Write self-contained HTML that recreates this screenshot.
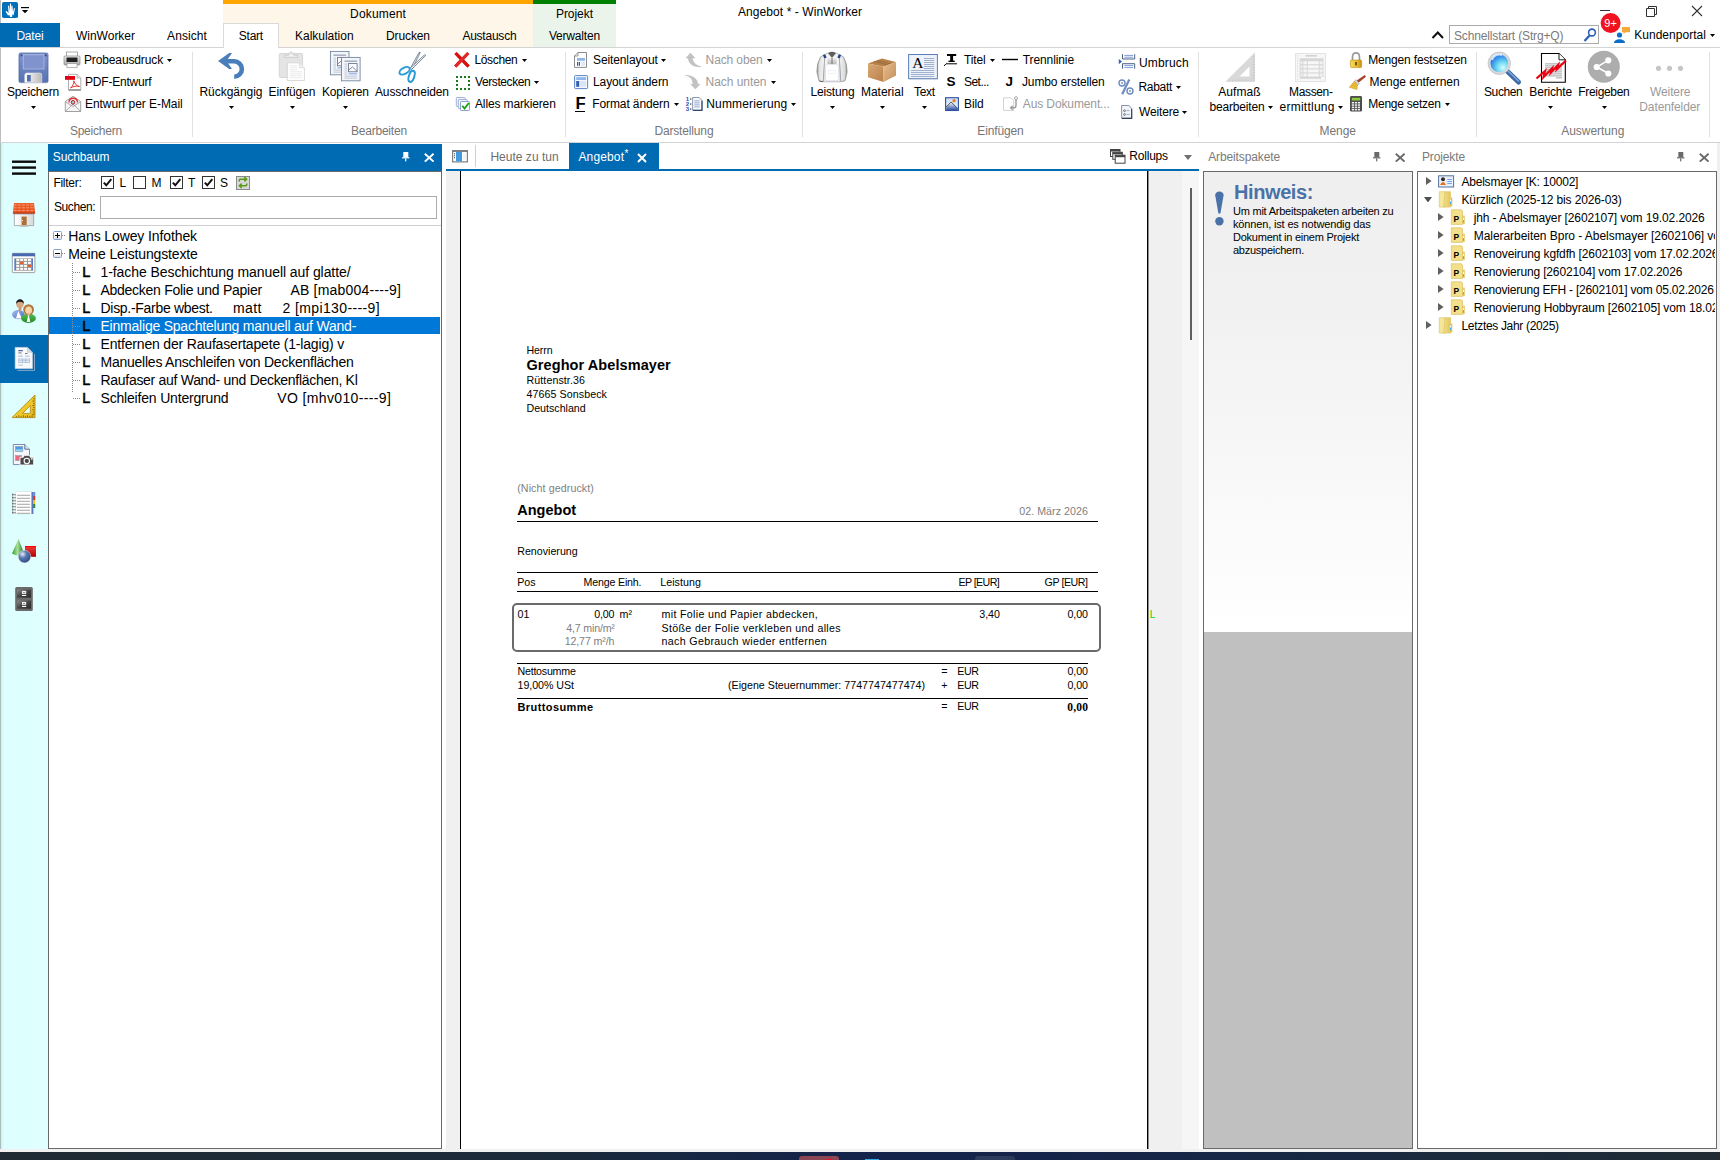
<!DOCTYPE html>
<html><head><meta charset="utf-8"><title>Angebot * - WinWorker</title>
<style>
html,body{margin:0;padding:0}
body{width:1720px;height:1160px;position:relative;overflow:hidden;background:#fff;font-family:"Liberation Sans",sans-serif;font-size:12px;color:#000}
div,span,svg{position:absolute}
span{white-space:pre}
</style></head><body>
<div style="left:0px;top:0px;width:1px;height:143px;background:#bdbdbd"></div>
<div style="left:223px;top:0px;width:310px;height:47px;background:#fef6e9"></div>
<div style="left:223px;top:0px;width:310px;height:4px;background:#ffa500"></div>
<div style="left:533px;top:0px;width:83px;height:47px;background:#ebf4eb"></div>
<div style="left:533px;top:0px;width:83px;height:4px;background:#008000"></div>
<span style="top:6.84px;letter-spacing:0.162px;left:228.08px;width:300px;text-align:center;line-height:15px;">Dokument</span>
<span style="top:6.84px;letter-spacing:-0.051px;left:424.47px;width:300px;text-align:center;line-height:15px;">Projekt</span>
<span style="top:4.84px;letter-spacing:0.071px;left:650.04px;width:300px;text-align:center;line-height:15px;">Angebot * - WinWorker</span>
<div style="left:0px;top:23px;width:60px;height:24px;background:#006ab3"></div>
<span style="top:28.64px;letter-spacing:-0.203px;left:-120.10px;width:300px;text-align:center;line-height:15px;color:#fff;">Datei</span>
<span style="top:29.14px;letter-spacing:-0.014px;left:-44.51px;width:300px;text-align:center;line-height:15px;">WinWorker</span>
<span style="top:29.14px;letter-spacing:0.092px;left:37.05px;width:300px;text-align:center;line-height:15px;">Ansicht</span>
<div style="left:0px;top:47px;width:1720px;height:1px;background:#d4d4d4"></div>
<div style="left:223px;top:23px;width:56px;height:25px;background:#fff;border:1px solid #dadada;border-bottom:none;box-sizing:border-box"></div>
<span style="top:29.14px;letter-spacing:-0.269px;left:100.87px;width:300px;text-align:center;line-height:15px;">Start</span>
<span style="top:29.14px;letter-spacing:-0.011px;left:174.29px;width:300px;text-align:center;line-height:15px;">Kalkulation</span>
<span style="top:29.14px;letter-spacing:-0.098px;left:257.95px;width:300px;text-align:center;line-height:15px;">Drucken</span>
<span style="top:29.14px;letter-spacing:-0.227px;left:339.39px;width:300px;text-align:center;line-height:15px;">Austausch</span>
<span style="top:29.14px;letter-spacing:-0.189px;left:424.41px;width:300px;text-align:center;line-height:15px;">Verwalten</span>
<div style="left:0px;top:142px;width:1720px;height:1px;background:#d4d4d4"></div>
<div style="left:192px;top:52px;width:1px;height:85px;background:#e1e1e1"></div>
<div style="left:565px;top:52px;width:1px;height:85px;background:#e1e1e1"></div>
<div style="left:802px;top:52px;width:1px;height:85px;background:#e1e1e1"></div>
<div style="left:1198px;top:52px;width:1px;height:85px;background:#e1e1e1"></div>
<div style="left:1476px;top:52px;width:1px;height:85px;background:#e1e1e1"></div>
<div style="left:1709px;top:52px;width:1px;height:85px;background:#e1e1e1"></div>
<span style="top:124.34px;letter-spacing:-0.227px;left:-54.11px;width:300px;text-align:center;line-height:15px;color:#767676;">Speichern</span>
<span style="top:124.34px;letter-spacing:-0.205px;left:228.90px;width:300px;text-align:center;line-height:15px;color:#767676;">Bearbeiten</span>
<span style="top:124.34px;letter-spacing:-0.155px;left:533.92px;width:300px;text-align:center;line-height:15px;color:#767676;">Darstellung</span>
<span style="top:124.34px;letter-spacing:-0.134px;left:850.43px;width:300px;text-align:center;line-height:15px;color:#767676;">Einfügen</span>
<span style="top:124.34px;letter-spacing:-0.061px;left:1187.77px;width:300px;text-align:center;line-height:15px;color:#767676;">Menge</span>
<span style="top:124.34px;letter-spacing:-0.037px;left:1442.78px;width:300px;text-align:center;line-height:15px;color:#767676;">Auswertung</span>
<span style="top:85.34px;letter-spacing:-0.227px;left:-117.11px;width:300px;text-align:center;line-height:15px;">Speichern</span>
<svg style="left:30.5px;top:106.0px;" width="5" height="3" viewBox="0 0 5 3"><path d="M0 0H5L2.5 3Z" fill="#000"/></svg>
<span style="top:85.34px;letter-spacing:-0.037px;left:80.98px;width:300px;text-align:center;line-height:15px;">Rückgängig</span>
<svg style="left:228.5px;top:106.0px;" width="5" height="3" viewBox="0 0 5 3"><path d="M0 0H5L2.5 3Z" fill="#000"/></svg>
<span style="top:85.34px;letter-spacing:-0.047px;left:141.98px;width:300px;text-align:center;line-height:15px;">Einfügen</span>
<svg style="left:289.5px;top:106.0px;" width="5" height="3" viewBox="0 0 5 3"><path d="M0 0H5L2.5 3Z" fill="#000"/></svg>
<span style="top:85.34px;letter-spacing:-0.131px;left:195.43px;width:300px;text-align:center;line-height:15px;">Kopieren</span>
<svg style="left:343.0px;top:106.0px;" width="5" height="3" viewBox="0 0 5 3"><path d="M0 0H5L2.5 3Z" fill="#000"/></svg>
<span style="top:85.34px;letter-spacing:-0.116px;left:261.94px;width:300px;text-align:center;line-height:15px;">Ausschneiden</span>
<span style="top:85.34px;letter-spacing:-0.172px;left:682.41px;width:300px;text-align:center;line-height:15px;">Leistung</span>
<svg style="left:830.0px;top:106.0px;" width="5" height="3" viewBox="0 0 5 3"><path d="M0 0H5L2.5 3Z" fill="#000"/></svg>
<span style="top:85.34px;letter-spacing:0.002px;left:732.30px;width:300px;text-align:center;line-height:15px;">Material</span>
<svg style="left:879.8px;top:106.0px;" width="5" height="3" viewBox="0 0 5 3"><path d="M0 0H5L2.5 3Z" fill="#000"/></svg>
<span style="top:85.34px;letter-spacing:-0.354px;left:774.42px;width:300px;text-align:center;line-height:15px;">Text</span>
<svg style="left:922.1px;top:106.0px;" width="5" height="3" viewBox="0 0 5 3"><path d="M0 0H5L2.5 3Z" fill="#000"/></svg>
<span style="top:85.34px;letter-spacing:0.064px;left:1089.43px;width:300px;text-align:center;line-height:15px;">Aufmaß</span>
<span style="top:100.34px;letter-spacing:-0.172px;left:1086.91px;width:300px;text-align:center;line-height:15px;">bearbeiten</span>
<svg style="left:1268.0px;top:106.0px;" width="5" height="3" viewBox="0 0 5 3"><path d="M0 0H5L2.5 3Z" fill="#000"/></svg>
<span style="top:85.34px;letter-spacing:-0.359px;left:1160.82px;width:300px;text-align:center;line-height:15px;">Massen-</span>
<span style="top:100.34px;letter-spacing:0.231px;left:1157.12px;width:300px;text-align:center;line-height:15px;">ermittlung</span>
<svg style="left:1338.0px;top:106.0px;" width="5" height="3" viewBox="0 0 5 3"><path d="M0 0H5L2.5 3Z" fill="#000"/></svg>
<span style="top:85.34px;letter-spacing:-0.384px;left:1353.21px;width:300px;text-align:center;line-height:15px;">Suchen</span>
<span style="top:85.34px;letter-spacing:-0.179px;left:1400.61px;width:300px;text-align:center;line-height:15px;">Berichte</span>
<svg style="left:1548.2px;top:106.0px;" width="5" height="3" viewBox="0 0 5 3"><path d="M0 0H5L2.5 3Z" fill="#000"/></svg>
<span style="top:85.34px;letter-spacing:-0.305px;left:1453.85px;width:300px;text-align:center;line-height:15px;">Freigeben</span>
<svg style="left:1601.5px;top:106.0px;" width="5" height="3" viewBox="0 0 5 3"><path d="M0 0H5L2.5 3Z" fill="#000"/></svg>
<span style="top:85.34px;letter-spacing:-0.134px;left:1520.23px;width:300px;text-align:center;line-height:15px;color:#9a9a9a;">Weitere</span>
<span style="top:100.34px;letter-spacing:-0.095px;left:1519.75px;width:300px;text-align:center;line-height:15px;color:#9a9a9a;">Datenfelder</span>
<span style="top:53.34px;letter-spacing:-0.132px;left:84.00px;line-height:15px;">Probeausdruck</span>
<svg style="left:167.0px;top:59.0px;" width="5" height="3" viewBox="0 0 5 3"><path d="M0 0H5L2.5 3Z" fill="#000"/></svg>
<span style="top:75.34px;letter-spacing:-0.199px;left:85.00px;line-height:15px;">PDF-Entwurf</span>
<span style="top:97.34px;letter-spacing:-0.056px;left:85.00px;line-height:15px;">Entwurf per E-Mail</span>
<span style="top:53.34px;letter-spacing:-0.339px;left:474.40px;line-height:15px;">Löschen</span>
<svg style="left:522.0px;top:59.0px;" width="5" height="3" viewBox="0 0 5 3"><path d="M0 0H5L2.5 3Z" fill="#000"/></svg>
<span style="top:75.34px;letter-spacing:-0.408px;left:475.00px;line-height:15px;">Verstecken</span>
<svg style="left:534.0px;top:81.0px;" width="5" height="3" viewBox="0 0 5 3"><path d="M0 0H5L2.5 3Z" fill="#000"/></svg>
<span style="top:97.34px;letter-spacing:-0.134px;left:475.00px;line-height:15px;">Alles markieren</span>
<span style="top:53.34px;letter-spacing:-0.112px;left:593.00px;line-height:15px;">Seitenlayout</span>
<svg style="left:661.0px;top:59.0px;" width="5" height="3" viewBox="0 0 5 3"><path d="M0 0H5L2.5 3Z" fill="#000"/></svg>
<span style="top:75.34px;letter-spacing:-0.103px;left:593.00px;line-height:15px;">Layout ändern</span>
<span style="top:97.34px;letter-spacing:-0.116px;left:592.30px;line-height:15px;">Format ändern</span>
<svg style="left:674.0px;top:103.0px;" width="5" height="3" viewBox="0 0 5 3"><path d="M0 0H5L2.5 3Z" fill="#000"/></svg>
<span style="top:53.34px;letter-spacing:-0.116px;left:705.60px;line-height:15px;color:#9a9a9a;">Nach oben</span>
<svg style="left:766.5px;top:59.0px;" width="5" height="3" viewBox="0 0 5 3"><path d="M0 0H5L2.5 3Z" fill="#000"/></svg>
<span style="top:75.34px;letter-spacing:-0.049px;left:705.60px;line-height:15px;color:#9a9a9a;">Nach unten</span>
<svg style="left:770.5px;top:81.0px;" width="5" height="3" viewBox="0 0 5 3"><path d="M0 0H5L2.5 3Z" fill="#000"/></svg>
<span style="top:97.34px;letter-spacing:0.145px;left:706.30px;line-height:15px;">Nummerierung</span>
<svg style="left:791.0px;top:103.0px;" width="5" height="3" viewBox="0 0 5 3"><path d="M0 0H5L2.5 3Z" fill="#000"/></svg>
<span style="top:53.34px;letter-spacing:-0.127px;left:964.00px;line-height:15px;">Titel</span>
<svg style="left:990.0px;top:59.0px;" width="5" height="3" viewBox="0 0 5 3"><path d="M0 0H5L2.5 3Z" fill="#000"/></svg>
<span style="top:75.34px;letter-spacing:-0.536px;left:964.00px;line-height:15px;">Set...</span>
<span style="top:97.34px;letter-spacing:-0.079px;left:964.00px;line-height:15px;">Bild</span>
<span style="top:53.34px;letter-spacing:-0.105px;left:1022.80px;line-height:15px;">Trennlinie</span>
<span style="top:75.34px;letter-spacing:-0.141px;left:1022.00px;line-height:15px;">Jumbo erstellen</span>
<span style="top:97.34px;letter-spacing:-0.115px;left:1022.80px;line-height:15px;color:#9a9a9a;">Aus Dokument...</span>
<span style="top:55.64px;letter-spacing:0.159px;left:1139.00px;line-height:15px;">Umbruch</span>
<span style="top:80.14px;letter-spacing:-0.293px;left:1138.40px;line-height:15px;">Rabatt</span>
<svg style="left:1175.5px;top:85.8px;" width="5" height="3" viewBox="0 0 5 3"><path d="M0 0H5L2.5 3Z" fill="#000"/></svg>
<span style="top:105.34px;letter-spacing:-0.163px;left:1139.00px;line-height:15px;">Weitere</span>
<svg style="left:1182.0px;top:111.0px;" width="5" height="3" viewBox="0 0 5 3"><path d="M0 0H5L2.5 3Z" fill="#000"/></svg>
<span style="top:53.34px;letter-spacing:-0.177px;left:1368.30px;line-height:15px;">Mengen festsetzen</span>
<span style="top:75.34px;letter-spacing:-0.042px;left:1369.50px;line-height:15px;">Menge entfernen</span>
<span style="top:97.34px;letter-spacing:-0.258px;left:1368.30px;line-height:15px;">Menge setzen</span>
<svg style="left:1445.0px;top:103.0px;" width="5" height="3" viewBox="0 0 5 3"><path d="M0 0H5L2.5 3Z" fill="#000"/></svg>
<div style="left:1449px;top:25px;width:150px;height:19px;border:1px solid #ababab;box-sizing:border-box;background:#fff"></div>
<span style="top:29.14px;letter-spacing:-0.142px;left:1454.00px;line-height:15px;color:#7a7a7a;">Schnellstart (Strg+Q)</span>
<span style="top:27.84px;letter-spacing:0.034px;left:1634.20px;line-height:15px;">Kundenportal</span>
<svg style="left:1709.5px;top:34.0px;" width="5" height="3" viewBox="0 0 5 3"><path d="M0 0H5L2.5 3Z" fill="#000"/></svg>
<div style="left:0px;top:143px;width:48px;height:1009px;background:linear-gradient(90deg,#a9bdbd 0,#a9bdbd 1px,#d3f0f0 1px,#deffff 4px,#e0ffff 100%)"></div>
<div style="left:0px;top:335px;width:48px;height:48px;background:#006ab3"></div>
<div style="left:48px;top:144px;width:394px;height:27px;background:#006ab3"></div>
<span style="top:149.64px;letter-spacing:-0.097px;left:52.80px;line-height:15px;color:#fff;">Suchbaum</span>
<div style="left:48px;top:171px;width:394px;height:978px;border:1px solid #696969;box-sizing:border-box;background:#fff"></div>
<span style="top:175.84px;letter-spacing:-0.257px;left:53.40px;line-height:15px;">Filter:</span>
<div style="left:101px;top:176px;width:13px;height:13px;border:1px solid #333;box-sizing:border-box;background:#fff"></div>
<svg style="left:101px;top:176px;" width="13" height="13" viewBox="0 0 13 13"><path d="M2.8 6.6L5.3 9.3L10.3 3.2" fill="none" stroke="#111" stroke-width="2"/></svg>
<span style="top:175.64px;left:119.60px;line-height:15px;">L</span>
<div style="left:133px;top:176px;width:13px;height:13px;border:1px solid #333;box-sizing:border-box;background:#fff"></div>
<span style="top:175.64px;left:151.50px;line-height:15px;">M</span>
<div style="left:170px;top:176px;width:13px;height:13px;border:1px solid #333;box-sizing:border-box;background:#fff"></div>
<svg style="left:170px;top:176px;" width="13" height="13" viewBox="0 0 13 13"><path d="M2.8 6.6L5.3 9.3L10.3 3.2" fill="none" stroke="#111" stroke-width="2"/></svg>
<span style="top:175.64px;left:188.10px;line-height:15px;">T</span>
<div style="left:202px;top:176px;width:13px;height:13px;border:1px solid #333;box-sizing:border-box;background:#fff"></div>
<svg style="left:202px;top:176px;" width="13" height="13" viewBox="0 0 13 13"><path d="M2.8 6.6L5.3 9.3L10.3 3.2" fill="none" stroke="#111" stroke-width="2"/></svg>
<span style="top:175.64px;left:220.10px;line-height:15px;">S</span>
<div style="left:236px;top:175.5px;width:14px;height:14px;border:1px solid #8a8a8a;box-sizing:border-box;background:#d9d9d9"></div>
<span style="top:199.64px;letter-spacing:-0.407px;left:54.00px;line-height:15px;">Suchen:</span>
<div style="left:100px;top:196px;width:337px;height:23px;border:1px solid #ababab;box-sizing:border-box;background:#fff"></div>
<div style="left:49px;top:225px;width:392px;height:1px;background:#d0d0d0"></div>
<div style="left:49px;top:317px;width:391px;height:17px;background:#0078d7"></div>
<span style="top:227.05px;letter-spacing:-0.108px;left:68.30px;font-size:14px;line-height:18px;">Hans Lowey Infothek</span>
<span style="top:245.05px;letter-spacing:-0.146px;left:68.30px;font-size:14px;line-height:18px;">Meine Leistungstexte</span>
<span style="top:262.88px;left:82.30px;font-size:14.5px;line-height:18px;-webkit-text-stroke:0.55px #000;">L</span>
<span style="top:263.05px;letter-spacing:-0.073px;left:100.50px;font-size:14px;line-height:18px;">1-fache Beschichtung manuell auf glatte/</span>
<div style="left:73px;top:271.9px;width:7px;height:1px;background:repeating-linear-gradient(90deg,#888 0 1px,transparent 1px 2px)"></div>
<span style="top:280.88px;left:82.30px;font-size:14.5px;line-height:18px;-webkit-text-stroke:0.55px #000;">L</span>
<span style="top:281.05px;letter-spacing:-0.272px;left:100.50px;font-size:14px;line-height:18px;">Abdecken Folie und Papier</span>
<span style="top:281.05px;letter-spacing:0.214px;left:290.40px;font-size:14px;line-height:18px;">AB [mab004----9]</span>
<div style="left:73px;top:289.9px;width:7px;height:1px;background:repeating-linear-gradient(90deg,#888 0 1px,transparent 1px 2px)"></div>
<span style="top:298.88px;left:82.30px;font-size:14.5px;line-height:18px;-webkit-text-stroke:0.55px #000;">L</span>
<span style="top:299.05px;letter-spacing:-0.294px;left:100.50px;font-size:14px;line-height:18px;">Disp.-Farbe wbest.</span>
<span style="top:299.05px;letter-spacing:0.316px;left:233.10px;font-size:14px;line-height:18px;">matt</span>
<span style="top:299.05px;letter-spacing:0.373px;left:282.60px;font-size:14px;line-height:18px;">2 [mpi130----9]</span>
<div style="left:73px;top:307.9px;width:7px;height:1px;background:repeating-linear-gradient(90deg,#888 0 1px,transparent 1px 2px)"></div>
<span style="top:316.88px;left:82.30px;font-size:14.5px;line-height:18px;-webkit-text-stroke:0.55px #000;">L</span>
<span style="top:317.05px;letter-spacing:-0.218px;left:100.50px;font-size:14px;line-height:18px;color:#fff;">Einmalige Spachtelung manuell auf Wand-</span>
<div style="left:73px;top:325.9px;width:7px;height:1px;background:repeating-linear-gradient(90deg,#888 0 1px,transparent 1px 2px)"></div>
<span style="top:334.88px;left:82.30px;font-size:14.5px;line-height:18px;-webkit-text-stroke:0.55px #000;">L</span>
<span style="top:335.05px;letter-spacing:-0.177px;left:100.50px;font-size:14px;line-height:18px;">Entfernen der Raufasertapete (1-lagig) v</span>
<div style="left:73px;top:343.9px;width:7px;height:1px;background:repeating-linear-gradient(90deg,#888 0 1px,transparent 1px 2px)"></div>
<span style="top:352.88px;left:82.30px;font-size:14.5px;line-height:18px;-webkit-text-stroke:0.55px #000;">L</span>
<span style="top:353.05px;letter-spacing:-0.238px;left:100.50px;font-size:14px;line-height:18px;">Manuelles Anschleifen von Deckenflächen</span>
<div style="left:73px;top:361.9px;width:7px;height:1px;background:repeating-linear-gradient(90deg,#888 0 1px,transparent 1px 2px)"></div>
<span style="top:370.88px;left:82.30px;font-size:14.5px;line-height:18px;-webkit-text-stroke:0.55px #000;">L</span>
<span style="top:371.05px;letter-spacing:-0.294px;left:100.50px;font-size:14px;line-height:18px;">Raufaser auf Wand- und Deckenflächen, Kl</span>
<div style="left:73px;top:379.9px;width:7px;height:1px;background:repeating-linear-gradient(90deg,#888 0 1px,transparent 1px 2px)"></div>
<span style="top:388.88px;left:82.30px;font-size:14.5px;line-height:18px;-webkit-text-stroke:0.55px #000;">L</span>
<span style="top:389.05px;letter-spacing:-0.182px;left:100.50px;font-size:14px;line-height:18px;">Schleifen Untergrund</span>
<span style="top:389.05px;letter-spacing:0.360px;left:277.30px;font-size:14px;line-height:18px;">VO [mhv010----9]</span>
<div style="left:73px;top:397.9px;width:7px;height:1px;background:repeating-linear-gradient(90deg,#888 0 1px,transparent 1px 2px)"></div>
<div style="left:72px;top:263px;width:1px;height:130px;background:repeating-linear-gradient(180deg,#888 0 1px,transparent 1px 2px)"></div>
<svg style="left:53px;top:231.2px;" width="9" height="9" viewBox="0 0 9 9"><defs><linearGradient id="gEx" x1="0" y1="0" x2="0" y2="1"><stop offset="0.4" stop-color="#fff"/><stop offset="1" stop-color="#d8d8d8"/></linearGradient></defs><rect x="0.5" y="0.5" width="8" height="8" rx="1" fill="url(#gEx)" stroke="#7f9fd4"/><path d="M2 4.5H7" stroke="#000"/><path d="M4.5 2V7" stroke="#000"/></svg>
<div style="left:62px;top:235.2px;width:3px;height:1px;background:repeating-linear-gradient(90deg,#888 0 1px,transparent 1px 2px)"></div>
<svg style="left:53px;top:249.2px;" width="9" height="9" viewBox="0 0 9 9"><defs><linearGradient id="gEx" x1="0" y1="0" x2="0" y2="1"><stop offset="0.4" stop-color="#fff"/><stop offset="1" stop-color="#d8d8d8"/></linearGradient></defs><rect x="0.5" y="0.5" width="8" height="8" rx="1" fill="url(#gEx)" stroke="#7f9fd4"/><path d="M2 4.5H7" stroke="#000"/></svg>
<div style="left:62px;top:253.2px;width:3px;height:1px;background:repeating-linear-gradient(90deg,#888 0 1px,transparent 1px 2px)"></div>
<div style="left:446px;top:169px;width:753px;height:2px;background:#006ab3"></div>
<div style="left:569px;top:143px;width:90px;height:26px;background:#006ab3"></div>
<div style="left:475px;top:145px;width:1px;height:22px;background:#d0d0d0"></div>
<span style="top:149.64px;letter-spacing:0.021px;left:490.40px;line-height:15px;color:#6d6d6d;">Heute zu tun</span>
<span style="top:149.64px;letter-spacing:0.154px;left:578.40px;line-height:15px;color:#fff;">Angebot</span>
<span style="top:148.03px;left:624.50px;font-size:10px;line-height:12px;color:#fff;">*</span>
<svg style="left:637px;top:153px;" width="10" height="10" viewBox="0 0 10 10"><path d="M1 1L9 9M9 1L1 9" stroke="#fff" stroke-width="2" fill="none"/></svg>
<span style="top:148.84px;letter-spacing:-0.204px;left:1129.30px;line-height:15px;">Rollups</span>
<svg style="left:1184px;top:155px;" width="8" height="5" viewBox="0 0 8 5"><path d="M0 0H8L4 5Z" fill="#707070"/></svg>
<div style="left:446px;top:171px;width:753px;height:978px;background:#f0f0f0"></div>
<div style="left:1182px;top:171px;width:17px;height:978px;background:#f6f6f6"></div>
<div style="left:1190px;top:188px;width:2px;height:152px;background:#606060"></div>
<div style="left:460px;top:171px;width:688px;height:978px;background:#fff;border-left:1px solid #000;border-right:1px solid #000;box-sizing:border-box"></div>
<div style="left:1148px;top:171px;width:1px;height:978px;background:#8c8c8c"></div>
<div style="left:446px;top:1149px;width:753px;height:1px;background:#f0f0f0"></div>
<span style="top:343.80px;letter-spacing:-0.131px;left:526.50px;font-size:10.67px;line-height:13px;">Herrn</span>
<span style="top:355.98px;letter-spacing:0.077px;left:526.50px;font-size:14.5px;line-height:18px;font-weight:700;">Greghor Abelsmayer</span>
<span style="top:373.80px;letter-spacing:0.086px;left:526.50px;font-size:10.67px;line-height:13px;">Rüttenstr.36</span>
<span style="top:387.80px;letter-spacing:0.078px;left:526.50px;font-size:10.67px;line-height:13px;">47665 Sonsbeck</span>
<span style="top:401.80px;letter-spacing:-0.005px;left:526.50px;font-size:10.67px;line-height:13px;">Deutschland</span>
<span style="top:481.80px;letter-spacing:0.099px;left:517.20px;font-size:10.67px;line-height:13px;color:#808080;">(Nicht gedruckt)</span>
<span style="top:500.98px;letter-spacing:0.029px;left:517.20px;font-size:14.5px;line-height:18px;font-weight:700;">Angebot</span>
<span style="top:504.80px;letter-spacing:0.060px;right:631.94px;font-size:10.67px;line-height:13px;color:#808080;">02. März 2026</span>
<div style="left:517px;top:521px;width:581px;height:1px;background:#000"></div>
<span style="top:544.80px;letter-spacing:0.006px;left:517.20px;font-size:10.67px;line-height:13px;">Renovierung</span>
<div style="left:517px;top:572px;width:581px;height:1px;background:#000"></div>
<span style="top:575.60px;left:517.20px;font-size:10.67px;line-height:13px;">Pos</span>
<span style="top:575.60px;letter-spacing:-0.177px;left:583.50px;font-size:10.67px;line-height:13px;">Menge Einh.</span>
<span style="top:575.60px;letter-spacing:0.050px;left:660.20px;font-size:10.67px;line-height:13px;">Leistung</span>
<span style="top:575.60px;letter-spacing:-0.576px;right:720.78px;font-size:10.67px;line-height:13px;">EP [EUR]</span>
<span style="top:575.60px;letter-spacing:-0.449px;right:632.45px;font-size:10.67px;line-height:13px;">GP [EUR]</span>
<div style="left:517px;top:591px;width:581px;height:1px;background:#000"></div>
<div style="left:512px;top:603px;width:589px;height:49px;border:2px solid #6a6a6a;border-radius:5px;box-sizing:border-box"></div>
<span style="top:607.50px;left:517.50px;font-size:10.67px;line-height:13px;">01</span>
<span style="top:607.50px;letter-spacing:-0.188px;right:1105.69px;font-size:10.67px;line-height:13px;">0,00</span>
<span style="top:607.50px;left:619.60px;font-size:10.67px;line-height:13px;">m²</span>
<span style="top:621.80px;letter-spacing:-0.184px;right:1105.28px;font-size:10.67px;line-height:13px;color:#808080;">4,7 min/m²</span>
<span style="top:635.40px;letter-spacing:-0.125px;right:1105.63px;font-size:10.67px;line-height:13px;color:#808080;">12,77 m²/h</span>
<span style="top:607.50px;letter-spacing:0.320px;left:661.50px;font-size:10.67px;line-height:13px;">mit Folie und Papier abdecken,</span>
<span style="top:621.80px;letter-spacing:0.339px;left:661.50px;font-size:10.67px;line-height:13px;">Stöße der Folie verkleben und alles</span>
<span style="top:635.40px;letter-spacing:0.343px;left:661.50px;font-size:10.67px;line-height:13px;">nach Gebrauch wieder entfernen</span>
<span style="top:607.50px;letter-spacing:-0.088px;right:720.29px;font-size:10.67px;line-height:13px;">3,40</span>
<span style="top:607.50px;letter-spacing:-0.062px;right:632.06px;font-size:10.67px;line-height:13px;">0,00</span>
<div style="left:517px;top:663px;width:571px;height:1px;background:#000"></div>
<span style="top:664.80px;letter-spacing:-0.231px;left:517.50px;font-size:10.67px;line-height:13px;">Nettosumme</span>
<span style="top:679.00px;letter-spacing:-0.048px;left:517.50px;font-size:10.67px;line-height:13px;">19,00% USt</span>
<span style="top:679.00px;letter-spacing:0.009px;right:794.99px;font-size:10.67px;line-height:13px;">(Eigene Steuernummer: 7747747477474)</span>
<span style="top:664.80px;left:941.30px;font-size:10.67px;line-height:13px;">=</span>
<span style="top:664.80px;letter-spacing:-0.400px;left:957.30px;font-size:10.67px;line-height:13px;">EUR</span>
<span style="top:679.00px;left:941.30px;font-size:10.67px;line-height:13px;">+</span>
<span style="top:679.00px;letter-spacing:-0.400px;left:957.30px;font-size:10.67px;line-height:13px;">EUR</span>
<span style="top:700.40px;left:941.30px;font-size:10.67px;line-height:13px;">=</span>
<span style="top:700.40px;letter-spacing:-0.400px;left:957.30px;font-size:10.67px;line-height:13px;">EUR</span>
<span style="top:664.80px;letter-spacing:-0.062px;right:632.06px;font-size:10.67px;line-height:13px;">0,00</span>
<span style="top:679.00px;letter-spacing:-0.062px;right:632.06px;font-size:10.67px;line-height:13px;">0,00</span>
<div style="left:517px;top:698px;width:571px;height:1px;background:#000"></div>
<span style="top:699.79px;letter-spacing:0.408px;left:517.50px;font-size:11px;line-height:14px;font-weight:700;">Bruttosumme</span>
<span style="top:699.72px;letter-spacing:0.219px;right:631.78px;font-size:11.5px;line-height:14px;font-weight:700;font-family:'Liberation Serif',serif;">0,00</span>
<span style="top:608.53px;left:1149.80px;font-size:10px;line-height:12px;color:#00e000;">L</span>
<span style="top:149.64px;letter-spacing:-0.122px;left:1208.20px;line-height:15px;color:#7a7a7a;">Arbeitspakete</span>
<div style="left:1203px;top:171px;width:210px;height:978px;border:1px solid #696969;box-sizing:border-box;background:#c0c0c0"></div>
<div style="left:1204px;top:172px;width:208px;height:460px;background:linear-gradient(180deg,#efefef 0,#f1f1f1 30%,#f8f8f8 65%,#fff 100%)"></div>
<span style="top:179.57px;letter-spacing:-0.406px;left:1234.00px;font-size:20px;line-height:25px;color:#4a72a8;font-weight:700;">Hinweis:</span>
<span style="top:204.19px;letter-spacing:-0.232px;left:1233.00px;font-size:11px;line-height:14px;">Um mit Arbeitspaketen arbeiten zu</span>
<span style="top:217.19px;letter-spacing:-0.156px;left:1233.00px;font-size:11px;line-height:14px;">können, ist es notwendig das</span>
<span style="top:230.19px;letter-spacing:-0.242px;left:1233.00px;font-size:11px;line-height:14px;">Dokument in einem Projekt</span>
<span style="top:243.19px;letter-spacing:-0.258px;left:1233.00px;font-size:11px;line-height:14px;">abzuspeichern.</span>
<svg style="left:1214px;top:191px;" width="11" height="36" viewBox="0 0 11 36"><path d="M1.2 4.2C1.2 -0.6 9.6 -0.6 9.6 4.2L6.4 22.5H4.4Z" fill="#4a72a8"/><circle cx="5.4" cy="30.3" r="4.2" fill="#4a72a8"/></svg>
<span style="top:149.64px;letter-spacing:-0.129px;left:1422.00px;line-height:15px;color:#7a7a7a;">Projekte</span>
<div style="left:1417px;top:171px;width:300px;height:978px;border:1px solid #696969;box-sizing:border-box;background:#fff"></div>
<div style="left:1418px;top:172px;width:296.5px;height:976px;overflow:hidden">
<span style="top:3.34px;letter-spacing:-0.224px;left:43.50px;line-height:15px;">Abelsmayer [K: 10002]</span>
<svg style="left:8.099999999999909px;top:5.0px;" width="5.6" height="8" viewBox="0 0 5.6 8"><path d="M0 0L5.6 4L0 8Z" fill="#606060"/></svg>
<span style="top:21.34px;letter-spacing:-0.130px;left:43.50px;line-height:15px;">Kürzlich (2025-12 bis 2026-03)</span>
<svg style="left:6.099999999999909px;top:24.7px;" width="8" height="5.5" viewBox="0 0 8 5.5"><path d="M0 0H8L4 5.5Z" fill="#505050"/></svg>
<span style="top:39.34px;letter-spacing:-0.110px;left:55.70px;line-height:15px;">jhh - Abelsmayer [2602107] vom 19.02.2026</span>
<svg style="left:20.09999999999991px;top:41.0px;" width="5.6" height="8" viewBox="0 0 5.6 8"><path d="M0 0L5.6 4L0 8Z" fill="#606060"/></svg>
<span style="top:57.34px;letter-spacing:-0.043px;left:55.70px;line-height:15px;">Malerarbeiten Bpro - Abelsmayer [2602106] vom</span>
<svg style="left:20.09999999999991px;top:59.0px;" width="5.6" height="8" viewBox="0 0 5.6 8"><path d="M0 0L5.6 4L0 8Z" fill="#606060"/></svg>
<span style="top:75.34px;letter-spacing:-0.130px;left:55.70px;line-height:15px;">Renoveirung kgfdfh [2602103] vom 17.02.2026</span>
<svg style="left:20.09999999999991px;top:77.0px;" width="5.6" height="8" viewBox="0 0 5.6 8"><path d="M0 0L5.6 4L0 8Z" fill="#606060"/></svg>
<span style="top:93.34px;letter-spacing:-0.158px;left:55.70px;line-height:15px;">Renovierung [2602104] vom 17.02.2026</span>
<svg style="left:20.09999999999991px;top:95.0px;" width="5.6" height="8" viewBox="0 0 5.6 8"><path d="M0 0L5.6 4L0 8Z" fill="#606060"/></svg>
<span style="top:111.34px;letter-spacing:-0.210px;left:55.70px;line-height:15px;">Renovierung EFH - [2602101] vom 05.02.2026</span>
<svg style="left:20.09999999999991px;top:113.0px;" width="5.6" height="8" viewBox="0 0 5.6 8"><path d="M0 0L5.6 4L0 8Z" fill="#606060"/></svg>
<span style="top:129.34px;letter-spacing:-0.118px;left:55.70px;line-height:15px;">Renovierung Hobbyraum [2602105] vom 18.02.2026</span>
<svg style="left:20.09999999999991px;top:131.0px;" width="5.6" height="8" viewBox="0 0 5.6 8"><path d="M0 0L5.6 4L0 8Z" fill="#606060"/></svg>
<span style="top:147.34px;letter-spacing:-0.326px;left:43.50px;line-height:15px;">Letztes Jahr (2025)</span>
<svg style="left:8.099999999999909px;top:149.0px;" width="5.6" height="8" viewBox="0 0 5.6 8"><path d="M0 0L5.6 4L0 8Z" fill="#606060"/></svg>
</div>
<svg style="left:401.8px;top:151.8px;" width="8" height="10" viewBox="0 0 8 10"><rect x="1.3" y="0" width="5" height="5.3" fill="#fff"/><rect x="0" y="5.2" width="7.4" height="1.2" fill="#fff"/><rect x="3.1" y="6.3" width="1.2" height="3.1" fill="#fff"/></svg>
<svg style="left:423.8px;top:152.8px;" width="10.4" height="9.4" viewBox="0 0 10.4 9.4"><path d="M0.8 0.8L9.6 8.6M9.6 0.8L0.8 8.6" stroke="#fff" stroke-width="1.9" fill="none"/></svg>
<svg style="left:1372.8px;top:151.8px;" width="8" height="10" viewBox="0 0 8 10"><rect x="1.3" y="0" width="5" height="5.3" fill="#6a6a6a"/><rect x="0" y="5.2" width="7.4" height="1.2" fill="#6a6a6a"/><rect x="3.1" y="6.3" width="1.2" height="3.1" fill="#6a6a6a"/></svg>
<svg style="left:1394.8px;top:152.8px;" width="10.4" height="9.4" viewBox="0 0 10.4 9.4"><path d="M0.8 0.8L9.6 8.6M9.6 0.8L0.8 8.6" stroke="#6a6a6a" stroke-width="1.9" fill="none"/></svg>
<svg style="left:1676.8px;top:151.8px;" width="8" height="10" viewBox="0 0 8 10"><rect x="1.3" y="0" width="5" height="5.3" fill="#6a6a6a"/><rect x="0" y="5.2" width="7.4" height="1.2" fill="#6a6a6a"/><rect x="3.1" y="6.3" width="1.2" height="3.1" fill="#6a6a6a"/></svg>
<svg style="left:1698.8px;top:152.8px;" width="10.4" height="9.4" viewBox="0 0 10.4 9.4"><path d="M0.8 0.8L9.6 8.6M9.6 0.8L0.8 8.6" stroke="#6a6a6a" stroke-width="1.9" fill="none"/></svg>
<div style="left:1717px;top:143px;width:3px;height:1006px;background:#f0f0f0"></div>
<div style="left:0px;top:1149px;width:1720px;height:3px;background:#f0f0f0"></div>
<div style="left:0px;top:1152px;width:1720px;height:8px;background:linear-gradient(90deg,#1f2a33 0,#1c2a3a 30%,#14234a 50%,#14234a 60%,#1b2a3c 85%,#202b33 100%)"></div>
<div style="left:799px;top:1156px;width:40px;height:6px;background:#8a4652;border-radius:3px"></div>
<div style="left:826px;top:1159px;width:6px;height:2px;background:#e8112d"></div>
<div style="left:865px;top:1159px;width:14px;height:2px;background:#35a6e6"></div>
<div style="left:975px;top:1156px;width:40px;height:6px;background:#2c3a5c;border-radius:3px"></div>
<svg style="left:0px;top:0px;" width="1720" height="143" viewBox="0 0 1720 143"><defs>
<linearGradient id="gFl" x1="0" y1="0" x2="0" y2="1"><stop offset="0" stop-color="#8397cf"/><stop offset="1" stop-color="#5570b2"/></linearGradient>
<linearGradient id="gMet" x1="0" y1="0" x2="1" y2="0"><stop offset="0" stop-color="#fff"/><stop offset="1" stop-color="#b8b8b8"/></linearGradient>
<linearGradient id="gRed" x1="0" y1="0" x2="0" y2="1"><stop offset="0" stop-color="#f58b8b"/><stop offset="0.5" stop-color="#e01010"/><stop offset="1" stop-color="#b00000"/></linearGradient>
<linearGradient id="gBoxL" x1="0" y1="0" x2="1" y2="1"><stop offset="0" stop-color="#d9a873"/><stop offset="1" stop-color="#b9804a"/></linearGradient>
<linearGradient id="gBoxR" x1="0" y1="0" x2="1" y2="1"><stop offset="0" stop-color="#e6bd90"/><stop offset="1" stop-color="#c48e58"/></linearGradient>
<radialGradient id="gLens" cx="0.68" cy="0.72" r="0.95"><stop offset="0" stop-color="#d8fbff"/><stop offset="0.3" stop-color="#6fdcf2"/><stop offset="0.65" stop-color="#2f86ea"/><stop offset="1" stop-color="#1a3fd0"/></radialGradient>
<linearGradient id="gGold" x1="0" y1="0" x2="1" y2="0"><stop offset="0" stop-color="#f8d860"/><stop offset="0.5" stop-color="#f0c030"/><stop offset="1" stop-color="#c89010"/></linearGradient>
<linearGradient id="gPrn" x1="0" y1="0" x2="0" y2="1"><stop offset="0" stop-color="#eee"/><stop offset="1" stop-color="#aaa"/></linearGradient>
<linearGradient id="gSky" x1="0" y1="0" x2="0" y2="1"><stop offset="0" stop-color="#c8dcf8"/><stop offset="1" stop-color="#f4f8ff"/></linearGradient>
<linearGradient id="gMtn" x1="0" y1="0" x2="0" y2="1"><stop offset="0" stop-color="#fff"/><stop offset="1" stop-color="#3050a0"/></linearGradient>
<linearGradient id="gGry" x1="0" y1="0" x2="0" y2="1"><stop offset="0" stop-color="#d8d8d8"/><stop offset="1" stop-color="#b0b0b0"/></linearGradient>
</defs><rect x="2" y="2" width="16" height="16" rx="1.8" fill="#0070ba"/><path d="M5.5 11.5L8 15.5L9.5 15L10 17H12L12.5 14L13.5 15.5L15 8.5L14 8L13 12L12.5 6L11.5 5.5L11.5 11L11 3.5H10L9.8 11L9 5.5L8 6L8.6 13L6.5 11Z" fill="#fff"/><rect x="21" y="7" width="8" height="1.2" fill="#000"/><path d="M21.8 10H28.2L25 13.3Z" fill="#000"/><path d="M1600 10.5H1610" stroke="#333" stroke-width="1"/><path d="M1646.5 8.5H1654.5V16.5H1646.5ZM1648.5 8.5V6.5H1656.5V14.5H1654.5" fill="none" stroke="#333" stroke-width="1"/><path d="M1692 6L1702 16M1702 6L1692 16" stroke="#333" stroke-width="1.1" fill="none"/><path d="M1432.5 38L1437.8 32.5L1443 38" stroke="#111" stroke-width="2" fill="none"/><circle cx="1592" cy="32.5" r="3.4" fill="#fff" stroke="#2b5fb8" stroke-width="1.6"/><path d="M1589.5 35.5L1584.5 41" stroke="#2b5fb8" stroke-width="2.2"/><circle cx="1610.6" cy="23" r="10" fill="#f0131f"/><circle cx="1619.5" cy="35" r="2.6" fill="#0a6fc8"/><path d="M1614 43C1614 38 1625 38 1625 43Z" fill="#0a6fc8"/><path d="M1622 27H1630V32.3H1625.5L1623.5 34V32.3H1622Z" fill="#f4a93c"/><rect x="19" y="53" width="29" height="29.5" rx="1.5" fill="url(#gFl)"/><rect x="19" y="53" width="29" height="29.5" rx="1.5" fill="none" stroke="#4a64a6" stroke-width="0.8"/><rect x="23.2" y="54.8" width="20.8" height="14.2" fill="#8093cc" stroke="#b9c4e4" stroke-width="0.7"/><rect x="20.5" y="54.5" width="1.8" height="1.8" fill="#2e437d"/><rect x="44.8" y="54.5" width="1.8" height="1.8" fill="#2e437d"/><path d="M24.8 82.5V75Q24.8 73 26.8 73H39.8Q41.8 73 41.8 75V82.5Z" fill="url(#gMet)" stroke="#e8e8e8" stroke-width="0.6"/><rect x="27" y="75" width="3.8" height="6.5" fill="#5570b2"/><rect x="20" y="82.5" width="28" height="1" fill="#ccd" opacity="0.6"/><rect x="66.5" y="52" width="11" height="5" fill="#fff" stroke="#999" stroke-width="0.8"/><rect x="64" y="56" width="16" height="9" rx="1" fill="url(#gPrn)" stroke="#888" stroke-width="0.7"/><rect x="66.5" y="57.5" width="11" height="4.5" fill="#222"/><rect x="67" y="63.5" width="10" height="4.2" fill="#fff" stroke="#999" stroke-width="0.7"/><path d="M68.5 74.3H77L80.8 78V89.7H68.5Z" fill="#fff" stroke="#9a9a9a" stroke-width="0.8"/><path d="M77 74.3V78H80.8" fill="#e8e8e8" stroke="#9a9a9a" stroke-width="0.6"/><rect x="65" y="76" width="10" height="3.8" fill="#e00010"/><path d="M70.5 88C73 86 74 83 73.8 80.8C75 84 77 86.5 79.5 86.5C77 85.5 73 86.5 70.5 88Z" fill="none" stroke="#e02020" stroke-width="0.9"/><rect x="68.5" y="89.7" width="12.3" height="0.8" fill="#555"/><path d="M65.3 101.5L73 96.3L80.7 101.5V111.5H65.3Z" fill="#f4f4f4" stroke="#8a8a8a" stroke-width="0.8"/><path d="M65.3 111.5L73 104L80.7 111.5M65.5 101.8L73 106.5L80.5 101.8" fill="none" stroke="#8a8a8a" stroke-width="0.7"/><path d="M69 102.5C69 96.8 77.5 96.8 77.5 102.5" fill="none" stroke="#e03030" stroke-width="1.3"/><circle cx="73" cy="102.3" r="1.8" fill="#9ecff0" stroke="#c01010" stroke-width="1"/><path d="M225 61.3H234.2A7.7 7.7 0 0 1 234.2 76.7" fill="none" stroke="#4a7ebb" stroke-width="4.6"/><path d="M218 61L229.2 53H232L226.5 61L232 69H229.2Z" fill="#4a7ebb"/><rect x="279.3" y="53.5" width="23.3" height="24" rx="1.2" fill="#e4e4e4" stroke="#cfcfcf" stroke-width="0.8"/><path d="M284.5 57.3V55.2H288.6C288.6 50.8 293.6 50.8 293.6 55.2H297.7V57.3Z" fill="#f4f4f4" stroke="#c4c4c4" stroke-width="0.8"/><circle cx="291.1" cy="54" r="1" fill="#ddd"/><path d="M287.3 62.8H299.3L304.4 67.8V80.5H287.3Z" fill="#fff" stroke="#d0d0d0" stroke-width="0.8"/><path d="M299.3 62.8V67.8H304.4" fill="#f0f0f0" stroke="#d0d0d0" stroke-width="0.6"/><rect x="289.7" y="65.5" width="7.3" height="0.7" fill="#e2e2e2"/><rect x="289.7" y="67.5" width="7.3" height="0.7" fill="#e2e2e2"/><rect x="289.7" y="69.5" width="7.3" height="0.7" fill="#e2e2e2"/><rect x="289.7" y="71.5" width="12.3" height="0.7" fill="#e2e2e2"/><rect x="289.7" y="73.5" width="12.3" height="0.7" fill="#e2e2e2"/><rect x="289.7" y="75.5" width="12.3" height="0.7" fill="#e2e2e2"/><rect x="289.7" y="77.5" width="12.3" height="0.7" fill="#e2e2e2"/><rect x="330.4" y="51.4" width="18.6" height="23.4" fill="#f3f5fb" stroke="#76869f" stroke-width="0.9"/><rect x="333.4" y="54.4" width="12.6" height="1.6" fill="#a9b3c4"/><rect x="333.4" y="57.699999999999996" width="2.6" height="0.8" fill="#b4bccb"/><rect x="333.4" y="59.699999999999996" width="2.6" height="0.8" fill="#b4bccb"/><rect x="333.4" y="61.699999999999996" width="2.6" height="0.8" fill="#b4bccb"/><rect x="333.4" y="63.699999999999996" width="2.6" height="0.8" fill="#b4bccb"/><rect x="333.4" y="65.69999999999999" width="2.6" height="0.8" fill="#b4bccb"/><rect x="333.4" y="67.69999999999999" width="2.6" height="0.8" fill="#b4bccb"/><rect x="337.4" y="57.6" width="8.6" height="8.2" fill="#fafbfe" stroke="#5e6b80" stroke-width="0.8"/><path d="M337.7 63.9L341.4 60.9L345.7 65.1" fill="none" stroke="#5e6b80" stroke-width="0.8"/><rect x="337.4" y="67.4" width="8.6" height="0.9" fill="#6ea0ea"/><rect x="333.4" y="69.7" width="12.6" height="0.8" fill="#b4bccb"/><rect x="333.4" y="71.7" width="12.6" height="0.8" fill="#b4bccb"/><rect x="341.5" y="57.4" width="18.6" height="23.4" fill="#f3f5fb" stroke="#76869f" stroke-width="0.9"/><rect x="344.5" y="60.4" width="12.6" height="1.6" fill="#a9b3c4"/><rect x="344.5" y="63.699999999999996" width="2.6" height="0.8" fill="#b4bccb"/><rect x="344.5" y="65.69999999999999" width="2.6" height="0.8" fill="#b4bccb"/><rect x="344.5" y="67.69999999999999" width="2.6" height="0.8" fill="#b4bccb"/><rect x="344.5" y="69.69999999999999" width="2.6" height="0.8" fill="#b4bccb"/><rect x="344.5" y="71.69999999999999" width="2.6" height="0.8" fill="#b4bccb"/><rect x="344.5" y="73.69999999999999" width="2.6" height="0.8" fill="#b4bccb"/><rect x="348.5" y="63.6" width="8.6" height="8.2" fill="#fafbfe" stroke="#5e6b80" stroke-width="0.8"/><path d="M348.8 69.9L352.5 66.9L356.8 71.1" fill="none" stroke="#5e6b80" stroke-width="0.8"/><rect x="348.5" y="73.4" width="8.6" height="0.9" fill="#6ea0ea"/><rect x="344.5" y="75.7" width="12.6" height="0.8" fill="#b4bccb"/><rect x="344.5" y="77.7" width="12.6" height="0.8" fill="#b4bccb"/><path d="M420.3 52.3L412.5 68.5L410.8 67.5L419 52.5Z" fill="#e8eef2" stroke="#4f6070" stroke-width="0.7"/><path d="M425.8 55.4L411.5 69.5L410.3 68L424.8 54.6Z" fill="#e8eef2" stroke="#4f6070" stroke-width="0.7"/><ellipse cx="404.6" cy="70.8" rx="5.6" ry="3" transform="rotate(-28 404.6 70.8)" fill="none" stroke="#2a9dd8" stroke-width="2"/><ellipse cx="411.6" cy="76.3" rx="5.8" ry="2.7" transform="rotate(-72 411.6 76.3)" fill="none" stroke="#2a9dd8" stroke-width="2"/><path d="M455.5 53L468.5 66.5M468.3 53L455.3 66.5" stroke="url(#gRed)" stroke-width="3.2" fill="none"/><path d="M455.5 53L468.5 66.5" stroke="#d81010" stroke-width="3.2" fill="none"/><path d="M468.3 53L455.3 66.5" stroke="#e02828" stroke-width="3" fill="none"/><rect x="456" y="76" width="2" height="2" fill="#1a7a1a"/><rect x="456" y="88" width="2" height="2" fill="#1a7a1a"/><rect x="456" y="76" width="2" height="2" fill="#1a7a1a"/><rect x="468" y="76" width="2" height="2" fill="#1a7a1a"/><rect x="460" y="76" width="2" height="2" fill="#1a7a1a"/><rect x="460" y="88" width="2" height="2" fill="#1a7a1a"/><rect x="456" y="80" width="2" height="2" fill="#1a7a1a"/><rect x="468" y="80" width="2" height="2" fill="#1a7a1a"/><rect x="464" y="76" width="2" height="2" fill="#1a7a1a"/><rect x="464" y="88" width="2" height="2" fill="#1a7a1a"/><rect x="456" y="84" width="2" height="2" fill="#1a7a1a"/><rect x="468" y="84" width="2" height="2" fill="#1a7a1a"/><rect x="468" y="76" width="2" height="2" fill="#1a7a1a"/><rect x="468" y="88" width="2" height="2" fill="#1a7a1a"/><rect x="456" y="88" width="2" height="2" fill="#1a7a1a"/><rect x="468" y="88" width="2" height="2" fill="#1a7a1a"/><rect x="456.3" y="97.5" width="9" height="9" rx="0.8" fill="#f2f5fb" stroke="#8aa2d0" stroke-width="0.8"/><rect x="458.3" y="99.5" width="9" height="9" rx="0.8" fill="#f2f5fb" stroke="#8aa2d0" stroke-width="0.8"/><rect x="460.5" y="101.5" width="9" height="9" rx="0.8" fill="#fbfcfe" stroke="#7a96c8" stroke-width="0.9"/><path d="M462.3 105.8L464.5 108.5L468.8 103" fill="none" stroke="#18a018" stroke-width="1.8"/><path d="M578 52.5H586.5V67.4H574.5V56Z" fill="#fff" stroke="#808080" stroke-width="0.9"/><path d="M574.5 56H578V52.5" fill="none" stroke="#808080" stroke-width="0.8"/><rect x="577" y="58" width="8" height="2.8" fill="#8fb6ea"/><rect x="577" y="62" width="1.2" height="3.8" fill="#2f5fb0"/><rect x="578.8" y="62" width="1.2" height="3.8" fill="#2f5fb0"/><rect x="581.3" y="62" width="3.7" height="3.8" fill="#dfe7f6"/><rect x="574.6" y="75.6" width="13" height="13" rx="0.8" fill="#f4f7fd" stroke="#5b86c8" stroke-width="1"/><rect x="576.2" y="77.2" width="9.8" height="2.8" fill="#8fb6ea"/><rect x="576.2" y="81" width="3" height="5.8" fill="#2f5fb0"/><rect x="580.2" y="81" width="5.8" height="5.8" fill="#dbe4f4"/><rect x="575" y="111" width="10" height="1" fill="#000"/><path d="M690.4 53L695 58H692.4C692.6 62 695.5 65.3 701 66.7C694 67.3 688.4 64 688.3 58H686Z" fill="#c2c2c2" stroke="#b0b0b0" stroke-width="0.4"/><path d="M695.4 89L700 84.2H697.6C697.6 79 693 75.3 685.2 75.3C691 76.5 692.9 80 693 84.2H690.8Z" fill="#c2c2c2" stroke="#b0b0b0" stroke-width="0.4"/><path d="M692.6 97.5H699L702 100.3V110.3H692.6Z" fill="#f6f8fc" stroke="#5b7090" stroke-width="0.7"/><path d="M702 100.8V110.3H693" fill="none" stroke="#2f4a6a" stroke-width="1.2"/><rect x="694.3" y="100.5" width="5.4" height="0.8" fill="#7f94c4"/><rect x="694.3" y="102.5" width="5.4" height="0.8" fill="#7f94c4"/><rect x="694.3" y="104.5" width="5.4" height="0.8" fill="#7f94c4"/><rect x="694.3" y="106.5" width="5.4" height="0.8" fill="#7f94c4"/><rect x="690.2" y="98.5" width="1.1" height="1.1" fill="#000"/><rect x="690.2" y="103.5" width="1.1" height="1.1" fill="#000"/><rect x="690.2" y="108.5" width="1.1" height="1.1" fill="#000"/><linearGradient id="gSlL" x1="0" y1="0" x2="1" y2="0"><stop offset="0" stop-color="#9c9c9c"/><stop offset="0.35" stop-color="#e4e4e4"/><stop offset="1" stop-color="#f6f6f6"/></linearGradient><linearGradient id="gSlR" x1="1" y1="0" x2="0" y2="0"><stop offset="0" stop-color="#9c9c9c"/><stop offset="0.35" stop-color="#dcdcdc"/><stop offset="1" stop-color="#f2f2f2"/></linearGradient><linearGradient id="gCh" x1="0" y1="0" x2="0" y2="1"><stop offset="0" stop-color="#f4f4f4"/><stop offset="1" stop-color="#b4b4b4"/></linearGradient><path d="M824 54.8L820.5 57Q816.6 64 816.9 72L819 80.8L823.3 81.6L824.6 60Z" fill="url(#gSlL)" stroke="#808080" stroke-width="0.7"/><path d="M840 54.8L843.5 57Q847.4 64 847.1 72L845 80.8L840.7 81.6L839.4 60Z" fill="url(#gSlR)" stroke="#808080" stroke-width="0.7"/><path d="M824 54.8L828 53L832 57.5L836 53L840 54.8L839.4 60L840.3 81.8H823.7L824.6 60Z" fill="#f4f4f4" stroke="#9a9a9a" stroke-width="0.6"/><path d="M827.3 58.5L832 57.5L836.7 58.5L836.5 64.5H827.5Z" fill="url(#gCh)"/><path d="M828 53Q832 50.6 836 53L832 57.8Z" fill="#5e5e5e"/><path d="M823 55.3L825.2 54.3L826.6 57.6L824.6 58.6Z" fill="#1f3f92"/><path d="M841 55.3L838.8 54.3L837.4 57.6L839.4 58.6Z" fill="#1f3f92"/><path d="M832 57.8V64.5" stroke="#555" stroke-width="0.8"/><rect x="825.6" y="64.3" width="12.8" height="16.4" rx="1.6" fill="#fff" stroke="#cdd6ea" stroke-width="0.6"/><rect x="828.3" y="70.3" width="7.4" height="3" fill="none" stroke="#e0e5f2" stroke-width="0.5"/><path d="M819 80.8L823.3 81.6L823 82.2L819.4 81.6Z" fill="#555"/><path d="M868 63.5L882 58.5L896 62L883.5 66.8Z" fill="#b8814a"/><path d="M874 61.3L888 65M877 60.3L891 64" stroke="#8a5c30" stroke-width="0.6"/><path d="M868 63.5L883.5 66.8V82L868 77.3Z" fill="url(#gBoxL)"/><path d="M883.5 66.8L896 62V75.5L883.5 82Z" fill="url(#gBoxR)"/><rect x="908.6" y="54.5" width="28.8" height="24" fill="#edf1fa" stroke="#5b7fb8" stroke-width="1"/><rect x="908.6" y="78.5" width="29.4" height="1" fill="#9fb0d0"/><rect x="924" y="58" width="10.2" height="0.8" fill="#8da2c6"/><rect x="924" y="60" width="10.2" height="0.8" fill="#8da2c6"/><rect x="924" y="62" width="10.2" height="0.8" fill="#8da2c6"/><rect x="924" y="64" width="10.2" height="0.8" fill="#8da2c6"/><rect x="924" y="66" width="10.2" height="0.8" fill="#8da2c6"/><rect x="924" y="68" width="10.2" height="0.8" fill="#8da2c6"/><rect x="911" y="70" width="23.2" height="0.8" fill="#8da2c6"/><rect x="911" y="72" width="23.2" height="0.8" fill="#8da2c6"/><rect x="911" y="74" width="23.2" height="0.8" fill="#8da2c6"/><rect x="911" y="76" width="23.2" height="0.8" fill="#8da2c6"/><rect x="947" y="54" width="9.2" height="2" fill="#000"/><rect x="950.2" y="56" width="2.9" height="5" fill="#000"/><rect x="948.5" y="60.6" width="6.2" height="1.4" fill="#000"/><path d="M957 63.8H946L944 66" stroke="#000" stroke-width="1" fill="none"/><rect x="945.6" y="97.7" width="12.8" height="12.8" fill="url(#gSky)" stroke="#2f4f9f" stroke-width="1.1"/><path d="M946.2 107L951 102L957.8 108.5V110H946.2Z" fill="url(#gMtn)"/><path d="M946.2 107L951 102L957.8 108.5" fill="none" stroke="#223" stroke-width="0.7"/><circle cx="954" cy="100.7" r="1.6" fill="#f07818"/><rect x="1002" y="58.8" width="16" height="1.4" fill="#000"/><path d="M1003.5 97.8H1011L1013.7 100.5V110.4H1003.5Z" fill="#fff" stroke="#c6c6c6" stroke-width="0.8"/><circle cx="1016" cy="98.2" r="1.5" fill="#fff" stroke="#9a9a9a" stroke-width="0.9"/><path d="M1016 99.7V105.5Q1016 107.7 1013.8 107.7H1011" fill="none" stroke="#9a9a9a" stroke-width="1.4"/><path d="M1012.6 105L1009.6 107.7L1012.6 110.4Z" fill="#9a9a9a"/><path d="M1118.8 59L1122 61.6L1118.8 64.2Z" fill="#2f5fc0"/><path d="M1122.5 54.2V59H1134.7V54.2" fill="#f4f7fc" stroke="#3b5577" stroke-width="0.9"/><rect x="1124.5" y="55" width="8.5" height="0.8" fill="#6f8fd0"/><rect x="1124.5" y="56.8" width="8.5" height="0.8" fill="#6f8fd0"/><path d="M1122.5 68.7V63.7H1134.7V68.7" fill="#f4f7fc" stroke="#3b5577" stroke-width="0.9"/><rect x="1124.5" y="65.2" width="8.5" height="0.8" fill="#6f8fd0"/><rect x="1124.5" y="67" width="8.5" height="0.8" fill="#6f8fd0"/><circle cx="1122" cy="83" r="3" fill="none" stroke="#6e8cc0" stroke-width="1.4"/><circle cx="1122" cy="83" r="0.9" fill="#6e8cc0"/><circle cx="1130" cy="91" r="3" fill="none" stroke="#6e8cc0" stroke-width="1.4"/><circle cx="1130" cy="91" r="0.9" fill="#6e8cc0"/><path d="M1129.3 79.5L1122.2 94.3" stroke="#6e8cc0" stroke-width="2.2"/><path d="M1121.6 105.5H1128.8L1131.7 108.3V118.3H1121.6Z" fill="#f1f4fa" stroke="#66788f" stroke-width="0.8"/><path d="M1131.7 109V118.4H1122" fill="none" stroke="#2f3f55" stroke-width="1.1"/><circle cx="1124.5" cy="110.7" r="0.9" fill="none" stroke="#333" stroke-width="0.6"/><circle cx="1124.5" cy="114.5" r="0.9" fill="none" stroke="#333" stroke-width="0.6"/><rect x="1126.5" y="110.3" width="3" height="0.8" fill="#8a97aa"/><rect x="1126.5" y="114.1" width="3" height="0.8" fill="#8a97aa"/><path d="M1255 52.3V81.7H1225.3Z" fill="#d9d9d9"/><path d="M1249.5 66.5V76.5H1239.5Z" fill="#fff"/><rect x="1229.5" y="79.5" width="0.8" height="2" fill="#c4c4c4"/><rect x="1252.8" y="56.0" width="2" height="0.8" fill="#c4c4c4"/><rect x="1232.5" y="79.5" width="0.8" height="2" fill="#c4c4c4"/><rect x="1252.8" y="58.7" width="2" height="0.8" fill="#c4c4c4"/><rect x="1235.5" y="79.5" width="0.8" height="2" fill="#c4c4c4"/><rect x="1252.8" y="61.4" width="2" height="0.8" fill="#c4c4c4"/><rect x="1238.5" y="79.5" width="0.8" height="2" fill="#c4c4c4"/><rect x="1252.8" y="64.1" width="2" height="0.8" fill="#c4c4c4"/><rect x="1241.5" y="79.5" width="0.8" height="2" fill="#c4c4c4"/><rect x="1252.8" y="66.8" width="2" height="0.8" fill="#c4c4c4"/><rect x="1244.5" y="79.5" width="0.8" height="2" fill="#c4c4c4"/><rect x="1252.8" y="69.5" width="2" height="0.8" fill="#c4c4c4"/><rect x="1247.5" y="79.5" width="0.8" height="2" fill="#c4c4c4"/><rect x="1252.8" y="72.2" width="2" height="0.8" fill="#c4c4c4"/><rect x="1250.5" y="79.5" width="0.8" height="2" fill="#c4c4c4"/><rect x="1252.8" y="74.9" width="2" height="0.8" fill="#c4c4c4"/><rect x="1253.5" y="79.5" width="0.8" height="2" fill="#c4c4c4"/><rect x="1252.8" y="77.6" width="2" height="0.8" fill="#c4c4c4"/><rect x="1295.6" y="53.6" width="30" height="27.8" fill="#f7f7f7" stroke="#dcdcdc" stroke-width="0.8"/><rect x="1305.5" y="55" width="11.5" height="1.6" fill="#d2d2d2"/><rect x="1299.7" y="58.3" width="23.8" height="20.5" fill="#d6d6d6"/><rect x="1300.6" y="61.2" width="1.8" height="3" fill="#efefef"/><rect x="1303.3" y="61.2" width="3.6" height="3" fill="#f4f4f4"/><rect x="1307.8" y="61.2" width="11" height="3" fill="#f7f7f7"/><rect x="1319.7" y="61.2" width="3" height="3" fill="#f1f1f1"/><rect x="1300.6" y="65.3" width="1.8" height="3" fill="#efefef"/><rect x="1303.3" y="65.3" width="3.6" height="3" fill="#f4f4f4"/><rect x="1307.8" y="65.3" width="11" height="3" fill="#f7f7f7"/><rect x="1319.7" y="65.3" width="3" height="3" fill="#f1f1f1"/><rect x="1300.6" y="69.4" width="1.8" height="3" fill="#efefef"/><rect x="1303.3" y="69.4" width="3.6" height="3" fill="#f4f4f4"/><rect x="1307.8" y="69.4" width="11" height="3" fill="#f7f7f7"/><rect x="1319.7" y="69.4" width="3" height="3" fill="#f1f1f1"/><rect x="1300.6" y="73.5" width="1.8" height="3" fill="#efefef"/><rect x="1303.3" y="73.5" width="3.6" height="3" fill="#f4f4f4"/><rect x="1307.8" y="73.5" width="11" height="3" fill="#f7f7f7"/><rect x="1319.7" y="73.5" width="3" height="3" fill="#f1f1f1"/><rect x="1297.3" y="55.5" width="0.8" height="0.8" fill="#bbb"/><rect x="1297.3" y="58.1" width="0.8" height="0.8" fill="#bbb"/><rect x="1297.3" y="60.7" width="0.8" height="0.8" fill="#bbb"/><rect x="1297.3" y="63.3" width="0.8" height="0.8" fill="#bbb"/><rect x="1297.3" y="65.9" width="0.8" height="0.8" fill="#bbb"/><rect x="1297.3" y="68.5" width="0.8" height="0.8" fill="#bbb"/><rect x="1297.3" y="71.1" width="0.8" height="0.8" fill="#bbb"/><rect x="1297.3" y="73.7" width="0.8" height="0.8" fill="#bbb"/><rect x="1297.3" y="76.3" width="0.8" height="0.8" fill="#bbb"/><rect x="1297.3" y="78.9" width="0.8" height="0.8" fill="#bbb"/><path d="M1321 76.8H1325.6L1321 81.4Z" fill="#fff" stroke="#ddd" stroke-width="0.5"/><path d="M1352.5 60.5V57.2C1352.5 51.5 1359.5 51.5 1359.5 57.2V60.5" fill="none" stroke="#9a9a9a" stroke-width="1.7"/><rect x="1350.4" y="60" width="11.2" height="7.6" rx="1.2" fill="url(#gGold)" stroke="#b88a10" stroke-width="0.6"/><rect x="1355.3" y="62" width="1.4" height="3.4" rx="0.6" fill="#3a2a00"/><path d="M1364.7 75L1366 76.8L1358.5 82.8L1356.7 80.5Z" fill="#a8452a"/><path d="M1356 79.7L1359.3 83.7L1357.5 85.2L1354.3 81.2Z" fill="#cfd6dc" stroke="#8d979f" stroke-width="0.5"/><path d="M1354.3 81.2L1357.5 85.2L1356.8 89.5L1349.3 87.3Z" fill="#f0c038" stroke="#c08a18" stroke-width="0.5"/><path d="M1352 86.3L1354.6 83.2M1354.4 87.3L1356.2 84.6" stroke="#c89020" stroke-width="0.6"/><rect x="1350" y="96" width="12" height="15.6" rx="1.4" fill="#4c4c4c"/><rect x="1351.8" y="97.8" width="8.4" height="2.7" fill="#8cc83c"/><rect x="1351.8" y="102.0" width="2.2" height="1.5" fill="#f2f2f2"/><rect x="1354.8" y="102.0" width="2.2" height="1.5" fill="#f2f2f2"/><rect x="1357.8" y="102.0" width="2.2" height="1.5" fill="#f2f2f2"/><rect x="1351.8" y="104.3" width="2.2" height="1.5" fill="#f2f2f2"/><rect x="1354.8" y="104.3" width="2.2" height="1.5" fill="#f2f2f2"/><rect x="1357.8" y="104.3" width="2.2" height="1.5" fill="#f2f2f2"/><rect x="1351.8" y="106.6" width="2.2" height="1.5" fill="#f2f2f2"/><rect x="1354.8" y="106.6" width="2.2" height="1.5" fill="#f2f2f2"/><rect x="1357.8" y="106.6" width="2.2" height="1.5" fill="#f2f2f2"/><rect x="1351.8" y="108.9" width="2.2" height="1.5" fill="#f2f2f2"/><rect x="1354.8" y="108.9" width="2.2" height="1.5" fill="#f2f2f2"/><rect x="1357.8" y="108.9" width="2.2" height="1.5" fill="#f2f2f2"/><path d="M1507 71L1518.5 82" stroke="#3f6aa8" stroke-width="5" stroke-linecap="round"/><path d="M1508 71L1518.5 81" stroke="#7fa6d8" stroke-width="1.6" stroke-linecap="round"/><circle cx="1499.3" cy="63.3" r="10" fill="url(#gLens)" stroke="#d6d8dc" stroke-width="2.4"/><circle cx="1499.3" cy="63.3" r="11.3" fill="none" stroke="#a9adb3" stroke-width="0.5"/><path d="M1492 60C1493 55.5 1498 53.5 1502 55" stroke="#e8f2ff" stroke-width="2" fill="none" opacity="0.8"/><path d="M1541.5 53.5H1559L1565.3 59.8V82.3H1541.5Z" fill="#fff" stroke="#000" stroke-width="1.1"/><path d="M1559 53.5V59.8H1565.3" fill="#fff" stroke="#000" stroke-width="0.9"/><rect x="1545" y="63.5" width="17" height="0.8" fill="#8c8c8c"/><rect x="1545" y="65.5" width="17" height="0.8" fill="#8c8c8c"/><rect x="1545" y="67.5" width="17" height="0.8" fill="#8c8c8c"/><rect x="1545" y="69.5" width="17" height="0.8" fill="#8c8c8c"/><rect x="1545" y="71.5" width="17" height="0.8" fill="#8c8c8c"/><rect x="1545" y="73.5" width="17" height="0.8" fill="#8c8c8c"/><rect x="1545" y="75.5" width="17" height="0.8" fill="#8c8c8c"/><rect x="1556" y="77.5" width="6" height="0.8" fill="#8c8c8c"/><path d="M1536.5 78.5L1545 71L1543.6 77L1552 68.5L1551 72.5L1558 65L1557 69L1566 60.5" fill="none" stroke="#f00010" stroke-width="2.2"/><circle cx="1603.8" cy="66.8" r="16" fill="#adadad"/><path d="M1608.3 60.3L1596.7 67L1608.3 73.5" fill="none" stroke="#fff" stroke-width="1.5"/><circle cx="1608.3" cy="60.3" r="3.1" fill="#fff"/><circle cx="1596.7" cy="67" r="3.1" fill="#fff"/><circle cx="1608.3" cy="73.5" r="3.1" fill="#fff"/><circle cx="1658.5" cy="68.3" r="2.6" fill="#c6c6c6"/><circle cx="1669.5" cy="68.3" r="2.6" fill="#c6c6c6"/><circle cx="1680.5" cy="68.3" r="2.6" fill="#c6c6c6"/></svg>
<span style="top:92.51px;left:575.60px;font-size:16.7px;line-height:21px;font-weight:700;">F</span>
<span style="top:73.22px;left:946.60px;font-size:13.5px;line-height:17px;font-weight:700;">S</span>
<span style="top:73.22px;left:1005.60px;font-size:13.5px;line-height:17px;font-weight:700;">J</span>
<span style="top:53.27px;left:912.30px;font-size:15.5px;line-height:19px;font-family:'Liberation Serif',serif;">A</span>
<span style="top:95.22px;left:685.80px;font-size:6px;line-height:8px;color:#2848c0;font-weight:700;">1</span>
<span style="top:100.22px;left:685.80px;font-size:6px;line-height:8px;color:#2848c0;font-weight:700;">2</span>
<span style="top:105.22px;left:685.80px;font-size:6px;line-height:8px;color:#2848c0;font-weight:700;">3</span>
<span style="top:16.19px;letter-spacing:-0.023px;left:1460.59px;width:300px;text-align:center;font-size:11px;line-height:14px;color:#fff;">9+</span>
<svg style="left:0px;top:143px;" width="48" height="1009" viewBox="0 143 48 1009"><defs>
<linearGradient id="nRoof" x1="0" y1="0" x2="0" y2="1"><stop offset="0" stop-color="#f0602a"/><stop offset="0.8" stop-color="#e8501a"/><stop offset="1" stop-color="#a82a10"/></linearGradient>
<linearGradient id="nWall" x1="0" y1="0" x2="1" y2="0"><stop offset="0" stop-color="#fff"/><stop offset="1" stop-color="#d8d8d8"/></linearGradient>
<linearGradient id="nYel" x1="0" y1="0" x2="1" y2="1"><stop offset="0" stop-color="#f8dc40"/><stop offset="1" stop-color="#e8b818"/></linearGradient>
<linearGradient id="nCone" x1="0" y1="0" x2="1" y2="0"><stop offset="0" stop-color="#2f9a2f"/><stop offset="0.45" stop-color="#a8e098"/><stop offset="1" stop-color="#157015"/></linearGradient>
<linearGradient id="nRedc" x1="0" y1="0" x2="0" y2="1"><stop offset="0" stop-color="#f04040"/><stop offset="1" stop-color="#b00000"/></linearGradient>
<radialGradient id="nSph" cx="0.35" cy="0.3" r="0.8"><stop offset="0" stop-color="#e8eef8"/><stop offset="0.4" stop-color="#5878b0"/><stop offset="1" stop-color="#2a4478"/></radialGradient>
<linearGradient id="nBlu" x1="0" y1="0" x2="1" y2="1"><stop offset="0" stop-color="#a8c0f0"/><stop offset="1" stop-color="#4868b8"/></linearGradient>
<linearGradient id="nGrn" x1="0" y1="0" x2="0" y2="1"><stop offset="0" stop-color="#58c058"/><stop offset="1" stop-color="#208a20"/></linearGradient>
<linearGradient id="nDrw" x1="0" y1="0" x2="1" y2="1"><stop offset="0" stop-color="#8a8a8a"/><stop offset="0.5" stop-color="#444"/><stop offset="1" stop-color="#2a2a2a"/></linearGradient>
</defs><rect x="12" y="160.5" width="24" height="2.4" fill="#0a0a0a"/><rect x="12" y="166.4" width="24" height="2.4" fill="#0a0a0a"/><rect x="12" y="172.4" width="24" height="2.4" fill="#0a0a0a"/><path d="M14.3 214H33.7V225.6H14.3Z" fill="url(#nWall)" stroke="#9a9a9a" stroke-width="0.8"/><path d="M14 203H34L35.2 213.8H12.8Z" fill="url(#nRoof)"/><path d="M13.5 205H34.5" stroke="#f8b090" stroke-width="0.9" stroke-dasharray="3 1.2" opacity="0.85"/><path d="M13.5 207.8H34.5" stroke="#f8b090" stroke-width="0.9" stroke-dasharray="3 1.2" opacity="0.85"/><path d="M13.5 210.6H34.5" stroke="#f8b090" stroke-width="0.9" stroke-dasharray="3 1.2" opacity="0.85"/><rect x="21.2" y="216.2" width="5.8" height="9.6" fill="#a8703a" stroke="#f0e8e0" stroke-width="0.6"/><circle cx="22.5" cy="220.6" r="0.6" fill="#fff"/><rect x="20" y="225.8" width="8.2" height="1" fill="#b8b8b8"/><rect x="12.3" y="253.3" width="22.6" height="19.3" rx="0.8" fill="#fff" stroke="#8a8a8a" stroke-width="0.8"/><rect x="12.3" y="253.3" width="22.6" height="3" fill="#4668b0"/><rect x="14.3" y="258.3" width="1.8" height="12.4" fill="#5b7fc8"/><rect x="31.2" y="258.3" width="1.8" height="12.4" fill="#5b7fc8"/><rect x="16.1" y="258.3" width="15.1" height="12.4" fill="#9a9a9a"/><rect x="16.3" y="258.9" width="2.9" height="2" fill="#fff"/><rect x="20.2" y="258.9" width="2.9" height="2" fill="#fff"/><rect x="24.1" y="258.9" width="2.9" height="2" fill="#fff"/><rect x="28.0" y="258.9" width="2.9" height="2" fill="#fff"/><rect x="16.3" y="261.9" width="2.9" height="2" fill="#fff"/><rect x="20.2" y="261.9" width="2.9" height="2" fill="#f05818"/><rect x="24.1" y="261.9" width="2.9" height="2" fill="#fff"/><rect x="28.0" y="261.9" width="2.9" height="2" fill="#fff"/><rect x="16.3" y="264.9" width="2.9" height="2" fill="#fff"/><rect x="20.2" y="264.9" width="2.9" height="2" fill="#fff"/><rect x="24.1" y="264.9" width="2.9" height="2" fill="#fff"/><rect x="28.0" y="264.9" width="2.9" height="2" fill="#f05818"/><rect x="16.3" y="267.9" width="2.9" height="2" fill="#fff"/><rect x="20.2" y="267.9" width="2.9" height="2" fill="#fff"/><rect x="24.1" y="267.9" width="2.9" height="2" fill="#fff"/><rect x="28.0" y="267.9" width="2.9" height="2" fill="#fff"/><ellipse cx="18.3" cy="314.6" rx="6.3" ry="4.6" fill="url(#nBlu)"/><path d="M18.2 311L22 318.5H16Z" fill="#fff"/><circle cx="20" cy="304.3" r="3.7" fill="#d8a880"/><path d="M16.2 304C15.6 297.8 24.4 297.8 23.8 304C22.5 301 17.5 301 16.2 304Z" fill="#1a1a1a"/><rect x="18.6" y="307" width="2.8" height="3.6" fill="#c89870"/><ellipse cx="28.5" cy="318.3" rx="7.4" ry="4.7" fill="url(#nGrn)"/><path d="M28.5 314L30.3 322H26.7Z" fill="#fff"/><circle cx="28.6" cy="309.6" r="5.4" fill="#b07840"/><ellipse cx="28.6" cy="310.3" rx="3.4" ry="3.8" fill="#f8d4a4"/><rect x="27.4" y="313.2" width="2.4" height="2.2" fill="#e8b888"/><path d="M34.5 354V370.4H17.5" fill="none" stroke="#aab4c4" stroke-width="0.8"/><path d="M15.2 347.4H27.5L32.4 352.3V368.6H15.2Z" fill="#f8f9fb" stroke="#dfe3ea" stroke-width="0.6"/><path d="M27.5 347.4V352.3H32.4Z" fill="#d8dde6" stroke="#aab3c0" stroke-width="0.5"/><rect x="18.3" y="350.2" width="4.6" height="1" fill="#2f4a8a"/><rect x="18.3" y="352.2" width="3.2" height="0.7" fill="#888"/><rect x="18.3" y="353.4" width="3.6" height="0.7" fill="#aaa"/><rect x="25" y="353" width="2.5" height="0.8" fill="#555"/><rect x="18.3" y="355.6" width="4.6" height="1.2" fill="#b4c6e0"/><rect x="25" y="355.6" width="4.6" height="1.2" fill="#b4c6e0"/><rect x="18.3" y="358.6" width="11.6" height="4.4" fill="#a9bbd8"/><rect x="19" y="359.4" width="2.8" height="1" fill="#e8eef8"/><rect x="22.8" y="359.4" width="2.4" height="1" fill="#e8eef8"/><rect x="26.2" y="359.4" width="3" height="1" fill="#e8eef8"/><rect x="19" y="361.2" width="2.8" height="1" fill="#fff"/><rect x="22.8" y="361.2" width="2.4" height="1" fill="#fff"/><rect x="26.2" y="361.2" width="3" height="1" fill="#fff"/><rect x="18.3" y="364.6" width="4.6" height="1.1" fill="#b4c6e0"/><path d="M35 395V417.6H12Z" fill="url(#nYel)" stroke="#b08a18" stroke-width="0.9" stroke-linejoin="round"/><path d="M30.3 405.6V413.4H22.6Z" fill="#e0ffff" stroke="#b08a18" stroke-width="0.8"/><rect x="16.3" y="416" width="0.7" height="1.2" fill="#6a5008"/><rect x="33" y="398.5" width="1.4" height="0.7" fill="#6a5008"/><rect x="18.5" y="415.2" width="0.7" height="2.0" fill="#6a5008"/><rect x="32.2" y="400.7" width="2.2" height="0.7" fill="#6a5008"/><rect x="20.700000000000003" y="416" width="0.7" height="1.2" fill="#6a5008"/><rect x="33" y="402.9" width="1.4" height="0.7" fill="#6a5008"/><rect x="22.900000000000002" y="415.2" width="0.7" height="2.0" fill="#6a5008"/><rect x="32.2" y="405.1" width="2.2" height="0.7" fill="#6a5008"/><rect x="25.1" y="416" width="0.7" height="1.2" fill="#6a5008"/><rect x="33" y="407.3" width="1.4" height="0.7" fill="#6a5008"/><rect x="27.3" y="415.2" width="0.7" height="2.0" fill="#6a5008"/><rect x="32.2" y="409.5" width="2.2" height="0.7" fill="#6a5008"/><rect x="29.5" y="416" width="0.7" height="1.2" fill="#6a5008"/><rect x="33" y="411.7" width="1.4" height="0.7" fill="#6a5008"/><rect x="31.700000000000003" y="415.2" width="0.7" height="2.0" fill="#6a5008"/><rect x="32.2" y="413.9" width="2.2" height="0.7" fill="#6a5008"/><path d="M13.3 444.5H24.8L29.5 449.2V464.6H13.3Z" fill="#f4f6fc" stroke="#6a80b0" stroke-width="0.9"/><path d="M24.8 444.5V449.2H29.5" fill="#dfe5f2" stroke="#3a5080" stroke-width="0.8"/><rect x="15.6" y="446.6" width="7.2" height="4.8" fill="#4a9ae8" stroke="#8a98a8" stroke-width="0.6"/><rect x="16" y="449.3" width="6.4" height="1.8" fill="#90d8e8"/><rect x="15.6" y="455.6" width="6" height="5" fill="#e86a80" stroke="#8a98a8" stroke-width="0.6"/><path d="M20 457.3H23.2L24.3 455.3H29.4L30.4 457.3H33.7V465H20Z" fill="#4a4a4a" stroke="#fff" stroke-width="0.9" stroke-linejoin="round"/><circle cx="26.8" cy="461" r="2.7" fill="#4a4a4a" stroke="#fff" stroke-width="1.1"/><rect x="31" y="458.2" width="1.7" height="1.4" fill="#fff"/><rect x="15.8" y="491.7" width="15.6" height="22.2" fill="#fff" stroke="#d8dcdc" stroke-width="0.6"/><rect x="31" y="492" width="2.4" height="22" fill="#5a78c0"/><rect x="31" y="492" width="0.9" height="22" fill="#a8bce8"/><rect x="33.2" y="492" width="2" height="4" fill="#6a88d0"/><rect x="33.2" y="496" width="2" height="4" fill="#d83020"/><rect x="33.2" y="500" width="2" height="4" fill="#f0c020"/><rect x="33.2" y="504" width="2" height="4" fill="#2a8a2a"/><rect x="17" y="494.8" width="13" height="0.9" fill="#9a9a9a"/><rect x="12" y="494.2" width="4" height="1.1" fill="#9a8a8a"/><rect x="12" y="493.6" width="1.2" height="1.8" fill="#6a6a6a"/><rect x="17" y="497.8" width="13" height="0.9" fill="#9a9a9a"/><rect x="12" y="497.2" width="4" height="1.1" fill="#9a8a8a"/><rect x="12" y="496.6" width="1.2" height="1.8" fill="#6a6a6a"/><rect x="17" y="500.8" width="13" height="0.9" fill="#9a9a9a"/><rect x="12" y="500.2" width="4" height="1.1" fill="#9a8a8a"/><rect x="12" y="499.6" width="1.2" height="1.8" fill="#6a6a6a"/><rect x="17" y="503.8" width="13" height="0.9" fill="#9a9a9a"/><rect x="12" y="503.2" width="4" height="1.1" fill="#9a8a8a"/><rect x="12" y="502.6" width="1.2" height="1.8" fill="#6a6a6a"/><rect x="17" y="506.8" width="13" height="0.9" fill="#9a9a9a"/><rect x="12" y="506.2" width="4" height="1.1" fill="#9a8a8a"/><rect x="12" y="505.6" width="1.2" height="1.8" fill="#6a6a6a"/><rect x="17" y="509.8" width="13" height="0.9" fill="#9a9a9a"/><rect x="12" y="509.2" width="4" height="1.1" fill="#9a8a8a"/><rect x="12" y="508.6" width="1.2" height="1.8" fill="#6a6a6a"/><rect x="17" y="512.8" width="13" height="0.9" fill="#9a9a9a"/><rect x="12" y="512.1999999999999" width="4" height="1.1" fill="#9a8a8a"/><rect x="12" y="511.59999999999997" width="1.2" height="1.8" fill="#6a6a6a"/><path d="M18.5 539L24.2 553.5Q18 557.5 12 553.5Z" fill="url(#nCone)"/><rect x="25" y="546" width="11" height="10.8" fill="url(#nRedc)"/><rect x="25" y="546" width="11" height="1.2" fill="#f00"/><circle cx="24.5" cy="556.6" r="6.3" fill="url(#nSph)" stroke="#e8eef8" stroke-width="0.5"/><rect x="15.2" y="587" width="17.6" height="24" rx="1.5" fill="#6a6a6a"/><rect x="17" y="589.5" width="14" height="8.2" fill="url(#nDrw)"/><rect x="22" y="590.9" width="4.2" height="3" fill="#f4f4f4"/><rect x="23" y="592.0" width="2.2" height="0.8" fill="#777"/><rect x="22" y="594.9" width="4.2" height="1.1" fill="#fff"/><rect x="17" y="600.5" width="14" height="8.2" fill="url(#nDrw)"/><rect x="22" y="601.9" width="4.2" height="3" fill="#f4f4f4"/><rect x="23" y="603.0" width="2.2" height="0.8" fill="#777"/><rect x="22" y="605.9" width="4.2" height="1.1" fill="#fff"/></svg>
<svg style="left:236px;top:175px;" width="14" height="15" viewBox="0 0 14 15"><path d="M3.3 6.6V5.2Q3.3 4.2 4.3 4.2H10M8.3 2L10.6 4.2L8.3 6.4M10.7 8.4V9.8Q10.7 10.8 9.7 10.8H4M5.7 8.6L3.4 10.8L5.7 13" fill="none" stroke="#5a9a1a" stroke-width="1.6"/></svg>
<svg style="left:452px;top:150px;" width="16" height="13" viewBox="0 0 16 13"><rect x="0.6" y="0.6" width="14.8" height="11.3" fill="#fff" stroke="#7a8085" stroke-width="1.2"/><rect x="0" y="0" width="16" height="2" fill="#7a8085"/><rect x="4" y="2" width="6" height="9.3" fill="#3f9ae2"/><rect x="11" y="3.3" width="3" height="6.5" fill="#f4f4f4"/><circle cx="2.5" cy="3.7" r="0.6" fill="#555"/><circle cx="2.5" cy="5.7" r="0.6" fill="#555"/><circle cx="2.5" cy="7.7" r="0.6" fill="#555"/></svg>
<svg style="left:1110px;top:149px;" width="16" height="15" viewBox="0 0 16 15"><rect x="0.5" y="0.5" width="9.5" height="7" fill="#fff" stroke="#444" stroke-width="1"/><rect x="0.5" y="0.5" width="9.5" height="2" fill="#444"/><rect x="2.8" y="3.3" width="9.5" height="7" fill="#fff" stroke="#444" stroke-width="1"/><rect x="2.8" y="3.3" width="9.5" height="2" fill="#444"/><rect x="5.2" y="6.2" width="9.8" height="8" fill="#fff" stroke="#444" stroke-width="1"/><rect x="5.2" y="6.2" width="9.8" height="2" fill="#444"/></svg>
<svg style="left:1418px;top:172px;" width="298" height="976" viewBox="1418 172 298 976"><defs><linearGradient id="pF" x1="0" y1="0" x2="1" y2="0"><stop offset="0" stop-color="#f0de8a"/><stop offset="1" stop-color="#e0c24e"/></linearGradient></defs><rect x="1438.6" y="175.8" width="15" height="11.2" fill="#eaf0fa" stroke="#56729f" stroke-width="1"/><circle cx="1443" cy="179.2" r="2" fill="#2a2a2a"/><path d="M1440 185.1Q1443 179.0 1446 185.1Z" fill="#e8701a"/><rect x="1447.3" y="179.0" width="4.6" height="0.9" fill="#6b9ae8"/><rect x="1447.3" y="181.0" width="4.6" height="0.9" fill="#6b9ae8"/><rect x="1447.3" y="183.0" width="4.6" height="0.9" fill="#6b9ae8"/><path d="M1439.3 191.7H1445.5L1445.5 207.1H1439.3Z" fill="#f4e79c" stroke="#dcc25a" stroke-width="0.6"/><path d="M1445 191.7H1450.5V197.5L1452 198.0V206.0H1450.5V207.1H1443.5Z" fill="url(#pF)" stroke="#dcc060" stroke-width="0.6"/><rect x="1450" y="199.5" width="1" height="4.6" fill="#4aa8e8"/><rect x="1450" y="199.5" width="1" height="2" fill="#fff"/><path d="M1451.3 209.8H1461.5L1462.5 211.0V224.4H1451.3Z" fill="#f3e08a" stroke="#dcc060" stroke-width="0.7"/><path d="M1462.5 215.9H1464.6V223.8H1462.5Z" fill="#ecd070" stroke="#dcc060" stroke-width="0.5"/><rect x="1463" y="218.0" width="1" height="4.6" fill="#4aa8e8"/><rect x="1463" y="218.0" width="1" height="2.2" fill="#fff"/><path d="M1451.3 227.8H1461.5L1462.5 229.0V242.4H1451.3Z" fill="#f3e08a" stroke="#dcc060" stroke-width="0.7"/><path d="M1462.5 233.9H1464.6V241.8H1462.5Z" fill="#ecd070" stroke="#dcc060" stroke-width="0.5"/><rect x="1463" y="236.0" width="1" height="4.6" fill="#4aa8e8"/><rect x="1463" y="236.0" width="1" height="2.2" fill="#fff"/><path d="M1451.3 245.8H1461.5L1462.5 247.0V260.4H1451.3Z" fill="#f3e08a" stroke="#dcc060" stroke-width="0.7"/><path d="M1462.5 251.9H1464.6V259.8H1462.5Z" fill="#ecd070" stroke="#dcc060" stroke-width="0.5"/><rect x="1463" y="254.0" width="1" height="4.6" fill="#4aa8e8"/><rect x="1463" y="254.0" width="1" height="2.2" fill="#fff"/><path d="M1451.3 263.8H1461.5L1462.5 265.0V278.4H1451.3Z" fill="#f3e08a" stroke="#dcc060" stroke-width="0.7"/><path d="M1462.5 269.9H1464.6V277.8H1462.5Z" fill="#ecd070" stroke="#dcc060" stroke-width="0.5"/><rect x="1463" y="272.0" width="1" height="4.6" fill="#4aa8e8"/><rect x="1463" y="272.0" width="1" height="2.2" fill="#fff"/><path d="M1451.3 281.8H1461.5L1462.5 283.0V296.4H1451.3Z" fill="#f3e08a" stroke="#dcc060" stroke-width="0.7"/><path d="M1462.5 287.9H1464.6V295.8H1462.5Z" fill="#ecd070" stroke="#dcc060" stroke-width="0.5"/><rect x="1463" y="290.0" width="1" height="4.6" fill="#4aa8e8"/><rect x="1463" y="290.0" width="1" height="2.2" fill="#fff"/><path d="M1451.3 299.8H1461.5L1462.5 301.0V314.4H1451.3Z" fill="#f3e08a" stroke="#dcc060" stroke-width="0.7"/><path d="M1462.5 305.9H1464.6V313.8H1462.5Z" fill="#ecd070" stroke="#dcc060" stroke-width="0.5"/><rect x="1463" y="308.0" width="1" height="4.6" fill="#4aa8e8"/><rect x="1463" y="308.0" width="1" height="2.2" fill="#fff"/><path d="M1439.3 317.7H1445.5L1445.5 333.1H1439.3Z" fill="#f4e79c" stroke="#dcc25a" stroke-width="0.6"/><path d="M1445 317.7H1450.5V323.5L1452 324.0V332.0H1450.5V333.1H1443.5Z" fill="url(#pF)" stroke="#dcc060" stroke-width="0.6"/><rect x="1450" y="325.5" width="1" height="4.6" fill="#4aa8e8"/><rect x="1450" y="325.5" width="1" height="2" fill="#fff"/></svg>
<span style="top:214.05px;left:1453.40px;font-size:8.5px;line-height:11px;font-weight:700;">P</span>
<span style="top:232.05px;left:1453.40px;font-size:8.5px;line-height:11px;font-weight:700;">P</span>
<span style="top:250.05px;left:1453.40px;font-size:8.5px;line-height:11px;font-weight:700;">P</span>
<span style="top:268.05px;left:1453.40px;font-size:8.5px;line-height:11px;font-weight:700;">P</span>
<span style="top:286.05px;left:1453.40px;font-size:8.5px;line-height:11px;font-weight:700;">P</span>
<span style="top:304.05px;left:1453.40px;font-size:8.5px;line-height:11px;font-weight:700;">P</span>
</body></html>
